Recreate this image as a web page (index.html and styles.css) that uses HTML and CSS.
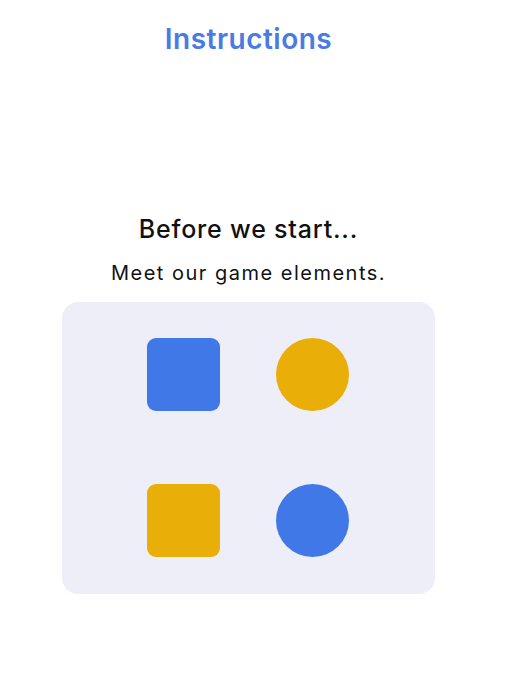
FILE: index.html
```html
<!DOCTYPE html>
<html lang="en">
<head>
<meta charset="utf-8">
<title>Instructions</title>
<link rel="stylesheet" href="styles.css">
</head>
<body>
<div class="page">
  <header class="header">
    <h1 class="title">Instructions</h1>
  </header>
  <main class="intro">
    <h2 class="heading">Before we start...</h2>
    <p class="subtitle">Meet our game elements.</p>
    <section class="card">
      <div class="grid">
        <div class="shape square blue"></div>
        <div class="shape circle yellow"></div>
        <div class="shape square yellow"></div>
        <div class="shape circle blue"></div>
      </div>
    </section>
  </main>
</div>
</body>
</html>
```
FILE: styles.css
```css
html, body {
  margin: 0;
  padding: 0;
  background: #ffffff;
}
body {
  font-family: Inter, "Noto Sans", sans-serif;
  color: #111111;
}
.page {
  width: 497px;
  display: flex;
  flex-direction: column;
  align-items: center;
}
.header {
  padding-top: 21px;
}
.title {
  margin: 0;
  font-size: 28px;
  line-height: 36px;
  font-weight: 600;
  letter-spacing: 0.5px;
  color: #4a7be3;
}
.intro {
  margin-top: 156px;
  display: flex;
  flex-direction: column;
  align-items: center;
}
.heading {
  margin: 0;
  font-size: 25px;
  line-height: 32px;
  font-weight: 500;
  letter-spacing: 0.8px;
}
.subtitle {
  margin: 15px 0 0;
  font-size: 20px;
  line-height: 26px;
  font-weight: 400;
  letter-spacing: 1.5px;
}
.card {
  margin-top: 16px;
  width: 373px;
  height: 292px;
  box-sizing: border-box;
  padding: 36px 85px;
  background: #eeeef9;
  border-radius: 16px;
}
.grid {
  display: grid;
  grid-template-columns: 73px 73px;
  grid-template-rows: 73px 73px;
  column-gap: 56px;
  row-gap: 73px;
}
.shape {
  width: 73px;
  height: 73px;
}
.square {
  border-radius: 9px;
}
.circle {
  border-radius: 50%;
}
.blue {
  background: #4178e8;
}
.yellow {
  background: #e9ae07;
}
```
